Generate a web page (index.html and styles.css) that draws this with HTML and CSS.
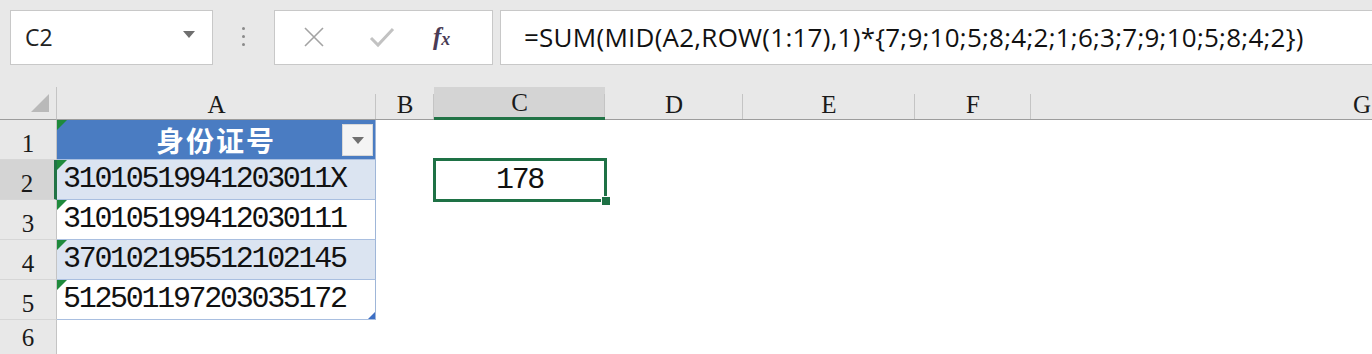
FILE: index.html
```html
<!DOCTYPE html>
<html>
<head>
<meta charset="UTF-8">
<title>Sheet</title>
<link rel="stylesheet" href="styles.css">
</head>
<body>
    <div class="Toolbar">
        <div class="NameBox">
            <span>C2</span>
            <svg class="Caret" width="12" height="7" viewBox="0 0 12 7"><polygon points="0,0 12,0 6,7" fill="#6f6f6f"/></svg>
        </div>
        <div class="Grip"><i></i><i></i><i></i></div>
        <div class="FxButtons">
            <svg width="22" height="22" viewBox="0 0 22 22"><path d="M2 2 L20 20 M20 2 L2 20" stroke="#a3a3a3" stroke-width="1.6" fill="none"/></svg>
            <svg width="26" height="22" viewBox="0 0 26 22"><path d="M2 12 L9 19 L24 3" stroke="#c2c2c2" stroke-width="3" fill="none"/></svg>
            <span class="Fx">f<small>x</small></span>
        </div>
        <div class="Formula">=SUM(MID(A2,ROW(1:17),1)*{7;9;10;5;8;4;2;1;6;3;7;9;10;5;8;4;2})</div>
    </div>

    <div class="Sheet">
        <div class="Corner"><svg width="18" height="18" viewBox="0 0 18 18"><polygon points="18,0 18,18 0,18" fill="#b9b9b9"/></svg></div>
        <div class="ColHead">A</div>
        <div class="ColHead">B</div>
        <div class="ColHead Active">C</div>
        <div class="ColHead">D</div>
        <div class="ColHead">E</div>
        <div class="ColHead">F</div>
        <div class="ColHead Last">G</div>

        <div class="RowHead">1</div>
        <div class="Cell Tbl Title Flag">身份证号<span class="Filter"><svg width="12" height="7" viewBox="0 0 12 7"><polygon points="0,0 12,0 6,7" fill="#707070"/></svg></span></div>
        <div class="Cell"></div><div class="Cell"></div><div class="Cell"></div><div class="Cell"></div><div class="Cell"></div><div class="Cell"></div>

        <div class="RowHead Active">2</div>
        <div class="Cell Tbl Band Flag">31010519941203011X</div>
        <div class="Cell"></div>
        <div class="Cell Selected">178<span class="Handle"></span></div>
        <div class="Cell"></div><div class="Cell"></div><div class="Cell"></div><div class="Cell"></div>

        <div class="RowHead">3</div>
        <div class="Cell Tbl Flag">310105199412030111</div>
        <div class="Cell"></div><div class="Cell"></div><div class="Cell"></div><div class="Cell"></div><div class="Cell"></div><div class="Cell"></div>

        <div class="RowHead">4</div>
        <div class="Cell Tbl Band Flag">370102195512102145</div>
        <div class="Cell"></div><div class="Cell"></div><div class="Cell"></div><div class="Cell"></div><div class="Cell"></div><div class="Cell"></div>

        <div class="RowHead">5</div>
        <div class="Cell Tbl Flag End">512501197203035172</div>
        <div class="Cell"></div><div class="Cell"></div><div class="Cell"></div><div class="Cell"></div><div class="Cell"></div><div class="Cell"></div>

        <div class="RowHead Partial">6</div>
        <div class="Cell"></div><div class="Cell"></div><div class="Cell"></div><div class="Cell"></div><div class="Cell"></div><div class="Cell"></div><div class="Cell"></div>
    </div>
</body>
</html>
```

FILE: styles.css
```css
body {
    margin: 0;
    width: 1372px;
    height: 354px;
    overflow: hidden;
    background: #ffffff;
    font-family: "Open Sans", "Noto Sans", sans-serif;
}

.Toolbar {
    display: flex;
    height: 87px;
    box-sizing: border-box;
    padding: 10px 0 0 10px;
    background: #e8e8e8;
}

.Toolbar > div {
    height: 55px;
    box-sizing: border-box;
}

.NameBox {
    width: 203px;
    display: flex;
    align-items: center;
    justify-content: space-between;
    padding: 0 17px 2px 14px;
    background: #fff;
    border: 1px solid #c8c8c8;
    font-size: 23px;
    color: #222;
}

.NameBox .Caret {
    margin-bottom: 4px;
}

.Grip {
    width: 61px;
    display: flex;
    flex-direction: column;
    align-items: center;
    justify-content: center;
    gap: 5px;
    padding-bottom: 2px;
}

.Grip i {
    width: 3px;
    height: 3px;
    background: #8a8a8a;
    border-radius: 50%;
}

.FxButtons {
    width: 219px;
    display: flex;
    align-items: center;
    gap: 44px;
    padding: 0 0 2px 28px;
    background: #fff;
    border: 1px solid #c8c8c8;
}

.Fx {
    font-family: "Liberation Serif", serif;
    font-style: italic;
    font-weight: bold;
    font-size: 25px;
    color: #4a3b55;
    margin-left: -6px;
}

.Fx small {
    font-size: 18px;
}

/* the formula bar runs on past the right edge */
.Formula {
    flex: 1;
    margin-left: 7px;
    display: flex;
    align-items: center;
    padding: 0 0 2px 23px;
    background: #fff;
    border: 1px solid #c8c8c8;
    border-right: none;
    font-size: 26px;
    letter-spacing: 0.25px;
    color: #111;
    white-space: nowrap;
}

.Sheet {
    display: grid;
    grid-template-columns: 57px 319px 58px 171px 138px 172px 116px 1fr;
    grid-template-rows: 33px repeat(5, 40px) 34px;
}

.Corner,
.ColHead,
.RowHead {
    background: #e8e8e8;
    font-family: "Liberation Serif", "DejaVu Serif", serif;
    font-size: 25px;
    color: #1a1a1a;
}

.Corner {
    display: flex;
    align-items: flex-end;
    justify-content: flex-end;
    padding: 0 7px 7px 0;
    border-right: 1px solid #c4c4c4;
    border-bottom: 1px solid #9c9c9c;
}

.ColHead {
    display: flex;
    align-items: flex-end;
    justify-content: center;
    box-sizing: border-box;
    border-bottom: 1px solid #9c9c9c;
    position: relative;
}

.ColHead::after {
    content: "";
    position: absolute;
    right: 0;
    top: 7px;
    bottom: 0;
    border-right: 1px solid #c4c4c4;
}

.ColHead.Active {
    background: #d4d4d4;
    border-bottom: 3px solid #217346;
}

/* column G is wider than the window, only its left part shows */
.ColHead.Last {
    justify-content: flex-end;
    padding-right: 1px;
}

.ColHead.Last::after {
    display: none;
}

.RowHead {
    display: flex;
    align-items: flex-end;
    justify-content: center;
    padding-bottom: 1px;
    box-sizing: border-box;
    border-right: 1px solid #c4c4c4;
    border-bottom: 1px solid #d6d6d6;
}

.RowHead.Active {
    background: #d4d4d4;
    border-right: 3px solid #217346;
}

.RowHead.Partial {
    border-bottom: none;
    padding-bottom: 0;
    line-height: 32px;
}

.Cell {
    position: relative;
    box-sizing: border-box;
    display: flex;
    align-items: flex-end;
    font-family: "Liberation Mono", monospace;
    font-size: 30px;
    letter-spacing: -2.3px;
    color: #111;
}

.Cell.Tbl {
    padding: 0 0 3px 6px;
    border-right: 1px solid #9fb6d8;
    border-bottom: 1px solid #a9bfe0;
}

.Cell.Band {
    background: #dbe4f1;
}

.Cell.Title {
    background: #4a7cc2;
    justify-content: center;
    align-items: center;
    padding: 0;
    font-family: "Noto Sans CJK SC", sans-serif;
    font-weight: bold;
    font-size: 28px;
    letter-spacing: 2px;
    color: #fff;
}

.Filter {
    position: absolute;
    right: 2px;
    top: 4px;
    width: 31px;
    height: 32px;
    box-sizing: border-box;
    display: flex;
    align-items: center;
    justify-content: center;
    background: #f4f4f4;
    border: 1px solid #d8d8d8;
}

.Cell.Flag::before {
    content: "";
    position: absolute;
    left: 0;
    top: 0;
    border-top: 10px solid #1f8a3c;
    border-right: 10px solid transparent;
}

.Cell.End::after {
    content: "";
    position: absolute;
    right: 0;
    bottom: 0;
    border-bottom: 7px solid #3d6fc4;
    border-left: 7px solid transparent;
}

.Cell.Selected {
    justify-content: center;
    padding-bottom: 3px;
}

.Cell.Selected::before {
    content: "";
    position: absolute;
    left: -1px;
    top: -2px;
    right: -2px;
    bottom: -2px;
    border: 3px solid #1e7145;
}

.Handle {
    position: absolute;
    right: -6px;
    bottom: -6px;
    width: 8px;
    height: 8px;
    background: #1e7145;
    border: 1px solid #fff;
}
```
